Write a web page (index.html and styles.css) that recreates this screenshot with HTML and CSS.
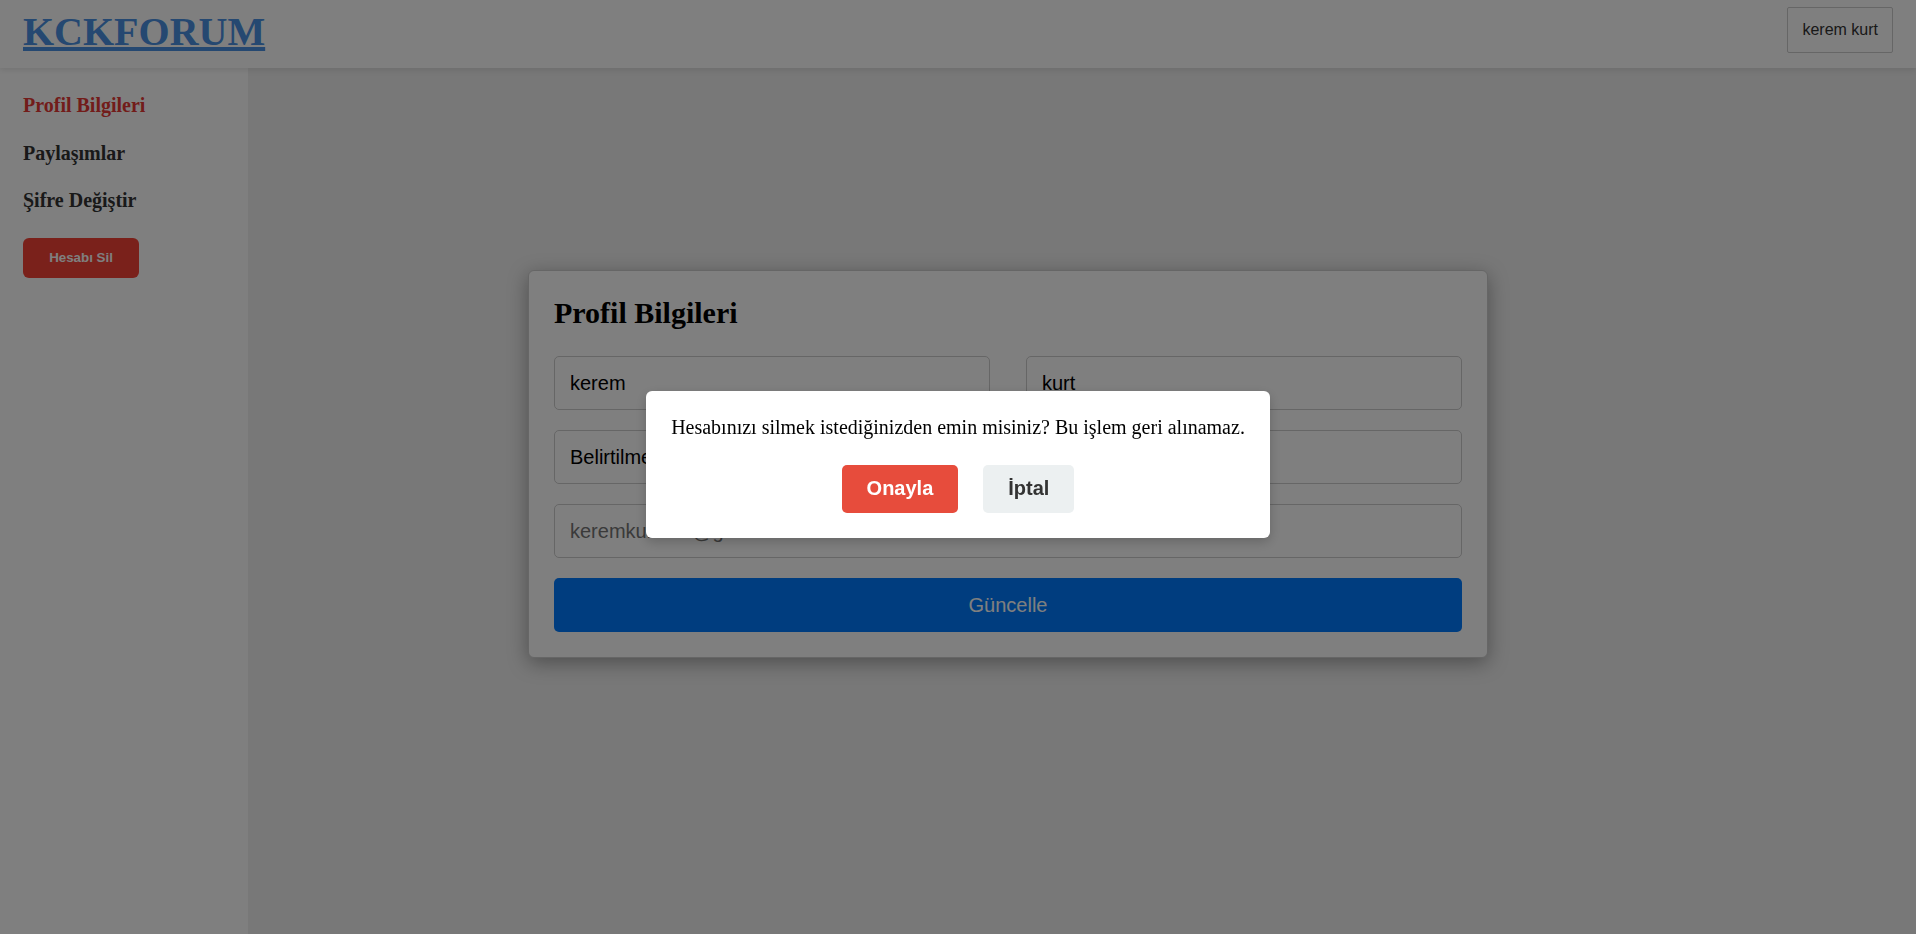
FILE: index.html
```html
<!DOCTYPE html>
<html lang="tr">
<head>
<meta charset="utf-8">
<title>KCKFORUM</title>
<link rel="stylesheet" href="styles.css">
</head>
<body>
<header class="topbar">
  <a class="logo" href="#">KCKFORUM</a>
  <button class="user-btn" type="button">kerem kurt</button>
</header>
<div class="layout">
  <aside class="sidebar">
    <nav class="side-nav">
      <a class="side-link active" href="#">Profil Bilgileri</a>
      <a class="side-link" href="#">Paylaşımlar</a>
      <a class="side-link" href="#">Şifre Değiştir</a>
    </nav>
    <button class="delete-btn" type="button">Hesabı Sil</button>
  </aside>
  <main class="content">
    <section class="card">
      <h2 class="card-title">Profil Bilgileri</h2>
      <form class="profile-form">
        <div class="form-grid">
          <input class="field" type="text" value="kerem">
          <input class="field" type="text" value="kurt">
          <input class="field" type="text" value="Belirtilmemiş">
          <input class="field" type="text" value="">
          <input class="field field-wide" type="email" placeholder="keremkurt200@gmail.com">
        </div>
        <button class="submit-btn" type="button">Güncelle</button>
      </form>
    </section>
  </main>
</div>
<div class="overlay">
  <div class="dialog">
    <p class="dialog-text">Hesabınızı silmek istediğinizden emin misiniz? Bu işlem geri alınamaz.</p>
    <div class="dialog-actions">
      <button class="btn-confirm" type="button">Onayla</button>
      <button class="btn-cancel" type="button">İptal</button>
    </div>
  </div>
</div>
</body>
</html>
```
FILE: styles.css
```css
* {
  box-sizing: border-box;
}

html,
body {
  margin: 0;
  height: 100%;
}

body {
  font-family: "Liberation Serif", "Times New Roman", serif;
  background: #f0f0f0;
  overflow: hidden;
}

.topbar {
  height: 68px;
  background: #fff;
  display: flex;
  align-items: flex-start;
  justify-content: space-between;
  padding: 0 23px;
  box-shadow: 0 2px 6px rgba(0, 0, 0, 0.1);
  position: relative;
  z-index: 1;
}

.logo {
  margin-top: 8px;
  font-size: 40px;
  font-weight: bold;
  color: #4a90e2;
  text-decoration: underline;
}

.user-btn {
  margin-top: 7px;
  height: 46px;
  padding: 0 14px;
  border: 1px solid #ccc;
  border-radius: 2px;
  background: #fff;
  color: #333;
  font-family: "Liberation Sans", Arial, sans-serif;
  font-size: 16px;
}

.layout {
  display: flex;
  height: calc(100% - 68px);
}

.sidebar {
  width: 248px;
  flex: none;
  background: #fff;
  padding: 14px 23px;
}

.side-nav {
  display: flex;
  flex-direction: column;
}

.side-link {
  display: block;
  padding: 12px 0;
  font-size: 20px;
  font-weight: bold;
  line-height: 23.5px;
  color: #333;
  text-decoration: none;
}

.side-link.active {
  color: #e53935;
}

.delete-btn {
  margin-top: 13px;
  width: 116px;
  height: 40px;
  border: none;
  border-radius: 6px;
  background: #f44336;
  color: #fff;
  font-family: "Liberation Sans", Arial, sans-serif;
  font-size: 13.33px;
  font-weight: bold;
}

.content {
  flex: 1;
  padding: 202px 0 0 280px;
}

.card {
  width: 960px;
  background: #fff;
  border: 1px solid #ccc;
  border-radius: 6px;
  padding: 25px;
  box-shadow: 0 5px 20px rgba(0, 0, 0, 0.35);
}

.card-title {
  margin: 0 0 26px;
  font-size: 30px;
  font-weight: bold;
  color: #000;
}

.form-grid {
  display: grid;
  grid-template-columns: 1fr 1fr;
  column-gap: 36px;
  row-gap: 20px;
}

.field {
  height: 54px;
  border: 1px solid #ccc;
  border-radius: 5px;
  padding: 0 15px;
  font-family: "Liberation Sans", Arial, sans-serif;
  font-size: 20px;
  color: #000;
  background: #fff;
}

.field::placeholder {
  color: #757575;
}

.field-wide {
  grid-column: span 2;
}

.submit-btn {
  display: block;
  margin-top: 20px;
  width: 100%;
  height: 54px;
  border: none;
  border-radius: 5px;
  background: #007bff;
  color: #fff;
  font-family: "Liberation Sans", Arial, sans-serif;
  font-size: 20px;
}

.overlay {
  position: fixed;
  inset: 0;
  z-index: 10;
  background: rgba(0, 0, 0, 0.5);
  display: flex;
  align-items: center;
  justify-content: center;
}

.dialog {
  background: #fff;
  border-radius: 6px;
  padding: 25px;
  text-align: center;
  box-shadow: 0 4px 12px rgba(0, 0, 0, 0.2);
  margin-bottom: 6px;
}

.dialog-text {
  margin: 0 0 26px;
  font-size: 20px;
  color: #000;
}

.dialog-actions {
  display: flex;
  justify-content: center;
  gap: 25px;
}

.btn-confirm,
.btn-cancel {
  height: 48px;
  padding: 0 25px;
  border: none;
  border-radius: 5px;
  font-family: "Liberation Sans", Arial, sans-serif;
  font-size: 20px;
  font-weight: bold;
}

.btn-confirm {
  background: #e74c3c;
  color: #fff;
}

.btn-cancel {
  background: #ecf0f1;
  color: #333;
}
```
